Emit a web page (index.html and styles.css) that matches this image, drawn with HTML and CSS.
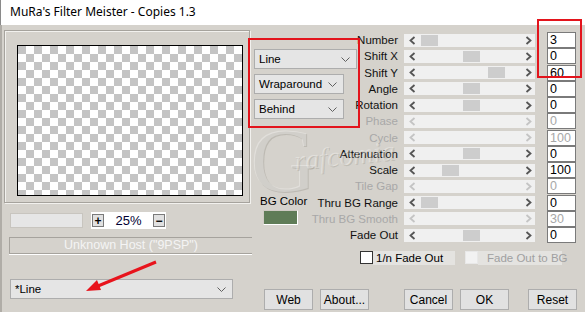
FILE: index.html
```html
<!DOCTYPE html>
<html lang="en">
<head>
    <meta charset="UTF-8">
    <title>MuRa's Filter Meister - Copies 1.3</title>
    <link rel="stylesheet" href="styles.css">
</head>
<body>
<div class="window">
    <div class="titlebar">MuRa's Filter Meister - Copies 1.3</div>

    <div class="main">
        <div class="left">
            <div class="preview-group">
                <div class="preview"></div>
            </div>
            <div class="zoom-row">
                <div class="blank-edit"></div>
                <div class="zoom-ctrl">
                    <span class="zbtn">+</span>
                    <span class="zval">25%</span>
                    <span class="zbtn">&minus;</span>
                </div>
            </div>
            <div class="host">Unknown Host ("9PSP")</div>
            <div class="combo combo-wide">
                <span>*Line</span>
                <svg class="chev" width="9" height="5" viewBox="0 0 9 5"><polyline points="0.5,0.5 4.5,4.5 8.5,0.5" /></svg>
            </div>
        </div>

        <div class="right">
            <div class="upper">
                <div class="mid">
                    <div class="combo combo-line">
                        <span>Line</span>
                        <svg class="chev" width="9" height="5" viewBox="0 0 9 5"><polyline points="0.5,0.5 4.5,4.5 8.5,0.5" /></svg>
                    </div>
                    <div class="combo combo-short">
                        <span>Wraparound</span>
                        <svg class="chev" width="9" height="5" viewBox="0 0 9 5"><polyline points="0.5,0.5 4.5,4.5 8.5,0.5" /></svg>
                    </div>
                    <div class="combo combo-short">
                        <span>Behind</span>
                        <svg class="chev" width="9" height="5" viewBox="0 0 9 5"><polyline points="0.5,0.5 4.5,4.5 8.5,0.5" /></svg>
                    </div>
                    <div class="bg-label">BG Color</div>
                    <div class="swatch"></div>
                </div>

                <div class="sliders" id="sliders"></div>
            </div>

            <div class="checks">
                <label class="check">
                    <span class="box"></span>
                    <span class="check-text">1/n Fade Out</span>
                </label>
                <label class="check disabled">
                    <span class="box"></span>
                    <span class="check-text">Fade Out to BG</span>
                </label>
            </div>

            <div class="buttons">
                <button class="btn">Web</button>
                <button class="btn">About...</button>
                <button class="btn gap-big">Cancel</button>
                <button class="btn">OK</button>
                <button class="btn gap-mid">Reset</button>
            </div>
        </div>
    </div>

    <!-- watermark + red annotations drawn over the dialog -->
    <div class="watermark">
        <span class="wm-g">G</span>
        <span class="wm-text">rafcomia</span>
    </div>
    <div class="mark mark-combos"></div>
    <div class="mark mark-values"></div>
    <svg class="arrow" width="585" height="312" viewBox="0 0 585 312">
        <line x1="156" y1="262" x2="98" y2="286" />
        <polygon points="86,291 97,280 101,290" />
    </svg>
</div>

<script>
    const rows = [
        ["Number", 17, "3", true],
        ["Shift X", 59, "0", true],
        ["Shift Y", 84, "60", true],
        ["Angle", 59, "0", true],
        ["Rotation", 59, "0", true],
        ["Phase", null, "0", false],
        ["Cycle", null, "100", false],
        ["Attenuation", 59, "0", true],
        ["Scale", 38, "100", true],
        ["Tile Gap", null, "0", false],
        ["Thru BG Range", 17, "0", true],
        ["Thru BG Smooth", null, "30", false],
        ["Fade Out", 59, "0", true]
    ];
    const left = '<svg width="7" height="9" viewBox="0 0 7 9"><polyline points="5.5,1 1.5,4.5 5.5,8" /></svg>';
    const right = '<svg width="7" height="9" viewBox="0 0 7 9"><polyline points="1.5,1 5.5,4.5 1.5,8" /></svg>';
    const box = document.getElementById("sliders");
    rows.forEach(([name, pos, val, on]) => {
        const row = document.createElement("div");
        row.className = "srow" + (on ? "" : " disabled");
        const thumb = pos === null ? "" : `<span class="thumb" style="left:${pos}px"></span>`;
        row.innerHTML =
            `<div class="slabel"><span>${name}</span></div>` +
            `<div class="track"><span class="arr">${left}</span>${thumb}<span class="arr arr-r">${right}</span></div>` +
            `<div class="val">${val}</div>`;
        box.appendChild(row);
    });
</script>
</body>
</html>
```

FILE: styles.css
```css
body {
    margin: 0;
    background: #d5d2cc;
}
.window {
    position: relative;
    width: 585px;
    height: 312px;
    overflow: hidden;
    background: #d5d2cc;
    font-family: "Liberation Sans", Arial, sans-serif;
    font-size: 11px;
    color: #000;
}
.titlebar {
    height: 25px;
    line-height: 24px;
    padding-left: 9px;
    background: #fff;
    font-family: "Noto Sans", "Open Sans", sans-serif;
    font-size: 12px;
    border-left: 1px solid #8a8a8a;
    box-sizing: border-box;
}
.main {
    display: flex;
    border-left: 2px solid #b0ada7;
    height: 287px;
    box-sizing: border-box;
}

/* left column */
.left {
    width: 246px;
    margin-left: 2px;
    padding-top: 5px;
}
.preview-group {
    width: 246px;
    height: 173px;
    box-sizing: border-box;
    border: 1px solid #a6a39d;
    box-shadow: inset 1px 1px 0 #f2f1ee, 1px 1px 0 #f2f1ee;
    padding: 14px 0 0 12px;
}
.preview {
    width: 226px;
    height: 151px;
    box-sizing: border-box;
    border: 1px solid #000;
    background-color: #fff;
    background-image:
        linear-gradient(45deg, #c4c4c4 25%, transparent 25%, transparent 75%, #c4c4c4 75%),
        linear-gradient(45deg, #c4c4c4 25%, transparent 25%, transparent 75%, #c4c4c4 75%);
    background-size: 16px 16px;
    background-position: 8px 0, 0 8px;
}
.zoom-row {
    display: flex;
    align-items: center;
    margin-top: 9px;
    padding-left: 6px;
}
.blank-edit {
    width: 73px;
    height: 15px;
    background: #e6e6e6;
    border: 1px solid #c8c5bf;
    box-sizing: border-box;
}
.zoom-ctrl {
    display: flex;
    align-items: center;
    margin-left: 8px;
    width: 75px;
    height: 17px;
    background: #fff;
    padding: 0 1px;
    box-sizing: border-box;
}
.zbtn {
    width: 12px;
    height: 13px;
    line-height: 12px;
    text-align: center;
    background: #e1e1e1;
    border: 1px solid #7a7a7a;
    box-sizing: border-box;
    font-size: 12px;
    font-weight: bold;
}
.zval {
    flex: 1;
    text-align: center;
    color: #000033;
    font-size: 13px;
}
.host {
    margin-top: 8px;
    margin-left: 5px;
    width: 243px;
    height: 17px;
    box-sizing: border-box;
    border: 1px solid #a6a39d;
    border-right: none;
    box-shadow: 0 1px 0 #fff;
    text-align: center;
    line-height: 15px;
    font-size: 12.5px;
    color: #f4f4f4;
}

/* combos */
.combo {
    display: flex;
    align-items: center;
    justify-content: space-between;
    height: 20px;
    box-sizing: border-box;
    background: #e5e5e5;
    border: 1px solid #adadad;
    padding: 0 6px 0 4px;
    font-size: 11.5px;
}
.chev {
    fill: none;
    stroke: #606060;
    stroke-width: 1;
}
.combo-wide {
    margin-top: 25px;
    margin-left: 6px;
    width: 223px;
}
.combo-line {
    width: 103px;
}
.combo-short {
    width: 90px;
    margin-top: 5px;
}

/* middle column */
.right {
    display: flex;
    flex-direction: column;
}
.upper {
    display: flex;
}
.mid {
    width: 108px;
    padding: 24px 0 0 4px;
    box-sizing: border-box;
}
.bg-label {
    margin-top: 75px;
    margin-left: 6px;
    font-size: 11.5px;
    line-height: 14px;
}
.swatch {
    width: 35px;
    height: 15px;
    margin: 2px 0 0 9px;
    background: #5f7c57;
    box-sizing: border-box;
    border: 1px solid #cfcbc4;
    border-right-color: #fff;
    border-bottom-color: #fff;
}

/* sliders */
.sliders {
    padding-top: 7px;
}
.srow {
    display: flex;
    align-items: center;
    height: 16.25px;
}
.slabel {
    width: 40px;
    display: flex;
    justify-content: flex-end;
    white-space: nowrap;
    font-size: 11.5px;
    color: #111;
}
.track {
    position: relative;
    display: flex;
    align-items: center;
    justify-content: space-between;
    width: 131px;
    height: 13px;
    margin-left: 6px;
    background: #f0f0f0;
    padding: 0 3px 0 5px;
    box-sizing: border-box;
}
.arr svg {
    display: block;
    fill: none;
    stroke: #555;
    stroke-width: 1.8;
}
.thumb {
    position: absolute;
    top: 1px;
    width: 17px;
    height: 11px;
    background: #cdcdcd;
}
.val {
    width: 29px;
    height: 16px;
    margin-left: 12px;
    box-sizing: border-box;
    border: 1px solid #7a7a7a;
    background: #fff;
    padding-left: 2px;
    line-height: 14px;
    font-size: 12.5px;
}
.srow.disabled .slabel,
.srow.disabled .val {
    color: #a8a8a8;
}
.srow.disabled .arr svg {
    stroke: #c4c4c4;
}

/* checkboxes */
.checks {
    display: flex;
    margin-top: 8px;
    padding-left: 110px;
}
.check {
    display: flex;
    align-items: center;
    height: 13px;
}
.box {
    width: 13px;
    height: 13px;
    box-sizing: border-box;
    border: 1px solid #333;
    background: #fff;
}
.check-text {
    width: 82px;
    height: 14px;
    line-height: 14px;
    padding-left: 3px;
    box-sizing: border-box;
    background: #e4e3e0;
    white-space: nowrap;
    font-size: 11.5px;
}
.check.disabled {
    margin-left: 10px;
}
.check.disabled .box {
    border-color: #e8e8e8;
    background: #f2f2f2;
}
.check.disabled .check-text {
    width: 84px;
    padding-left: 9px;
    color: #a0a0a0;
}

/* buttons */
.buttons {
    display: flex;
    margin-top: 25px;
    padding-left: 14px;
}
.btn {
    width: 49px;
    height: 21px;
    margin-right: 7px;
    padding: 0;
    background: #e1e1e1;
    border: 1px solid #adadad;
    font-family: "Liberation Sans", Arial, sans-serif;
    font-size: 12px;
    color: #000;
}
.btn.gap-big {
    margin-left: 28px;
}
.btn.gap-mid {
    margin-left: 12px;
}

/* overlays */
.watermark {
    position: absolute;
    left: 250px;
    top: 130px;
    pointer-events: none;
}
.wm-g {
    display: block;
    font-family: "Liberation Serif", serif;
    font-size: 92px;
    line-height: 60px;
    color: rgba(255, 255, 255, 0.3);
    text-shadow: 1px 1px 0 rgba(120, 115, 105, 0.25);
}
.wm-text {
    position: absolute;
    left: 44px;
    top: 12px;
    font-family: "Liberation Serif", serif;
    font-style: italic;
    font-size: 28px;
    line-height: 28px;
    color: rgba(255, 255, 255, 0.32);
    text-shadow: 1px 1px 0 rgba(120, 115, 105, 0.22);
    transform: rotate(-6deg);
}
.mark {
    position: absolute;
    border: 2px solid #e3141c;
}
.mark-combos {
    left: 248px;
    top: 38px;
    width: 108px;
    height: 86px;
}
.mark-values {
    left: 537px;
    top: 19px;
    width: 41px;
    height: 55px;
}
.arrow {
    position: absolute;
    left: 0;
    top: 0;
    pointer-events: none;
}
.arrow line {
    stroke: #e8141c;
    stroke-width: 3;
}
.arrow polygon {
    fill: #e8141c;
}
```
